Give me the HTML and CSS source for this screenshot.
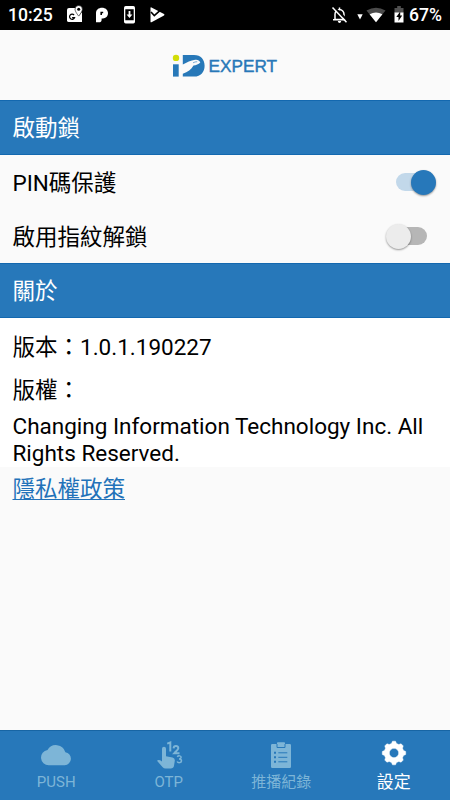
FILE: index.html
```html
<!DOCTYPE html>
<html lang="zh-Hant">
<head>
  <meta charset="UTF-8">
  <meta name="viewport" content="width=device-width, initial-scale=1.0">
  <title>iD Expert</title>
  <link rel="stylesheet" href="styles.css">
</head>
<body>
  <div class="status-bar">
    <span class="clock">10:25</span>
    <svg class="status-left" width="100" height="20" viewBox="0 0 100 20">
      <!-- maps -->
      <path fill="#fff" d="M3 3h7c0 3 1.500 5 3.200 7.500L16 7v10H3a2 2 0 0 1-2-1V5a2 2 0 0 1 2-2z"/>
      <path fill="none" stroke="#000" stroke-width="1.200" d="M8.100 10a2.600 2.600 0 1 0 .5 2.600H6.100"/>
      <path fill="#fff" stroke="#000" stroke-width=".6" d="M12.700.5a3.700 3.700 0 0 1 3.700 3.700c0 2.500-3.700 6.900-3.700 6.900S9 6.700 9 4.200A3.700 3.700 0 0 1 12.700.5z"/>
      <circle cx="12.700" cy="4.200" r="1.500"/>
      <!-- p mark -->
      <path fill="#fff" d="M30 8c0-3.200 2.600-5.300 6-5.300s6 2.200 6 5.400c0 3.300-2.300 5.300-5 5.300h-1.400v1.500c0 1.600-1 2.400-2.700 2.400H30z"/>
      <path fill="none" stroke="#000" stroke-width="1.600" d="M35.200 10V7.500h2"/>
      <!-- system update -->
      <rect x="58" y="1" width="11" height="17.500" rx="1.700" fill="#fff"/>
      <path d="M59.300 4.300h8.400v11h-8.400z"/>
      <path fill="#fff" d="M62.600 6h1.800v3.600h2L63.500 13l-2.900-3.400h2z"/>
      <!-- play -->
      <path fill="#fff" d="M85.500 2.500 98 9q1 .7 0 1.400l-12.500 6.900q-1 .3-1-.8V3q0-1 1-.5z"/>
      <path fill="none" stroke="#000" stroke-width="1.600" d="m85 7 3.300 3.600 6.700-6"/>
    </svg>
    <svg class="status-right" width="78" height="20" viewBox="0 0 78 20">
      <!-- notifications off -->
      <path fill="none" stroke="#fff" stroke-width="1.500" d="M5 14.500V9.200A4.600 4.600 0 0 1 9.500 4.500 4.600 4.600 0 0 1 14 9.200v5.300zM3 14.800h13M9.500 4.500V2.400"/>
      <path fill="#fff" d="M7.800 16h3.400q-.3 2-1.700 2t-1.700-2z"/>
      <path stroke="#000" stroke-width="2" d="m4.500 2.500 14 14"/>
      <path stroke="#fff" stroke-width="1.500" d="m2.500 2.500 14 14.700"/>
      <!-- wifi -->
      <path fill="#fff" d="M27.300 9.300h5.400L30 14.500z"/>
      <path fill="#4b4b4b" d="M36.500 5.400Q46 0 55.500 5.400L46 17.300z"/>
      <path fill="#fff" d="M39.600 9.300Q46 5.500 52.400 9.300L46 17.300z"/>
      <!-- battery -->
      <path fill="#505050" d="M64.500 3h2.700V1h3.600v2h2.700v5h-9z"/>
      <path fill="#fff" d="M64.500 7.500h9v10h-9z"/>
      <path d="M70.200 6.500 66.300 12h2.200v4l3.700-5.500h-2z"/>
    </svg>
    <span class="battery">67%</span>
  </div>

  <header class="header">
    <svg class="logo" width="106" height="24" viewBox="0 0 106 24">
      <circle cx="4" cy="3.900" r="3.200" fill="#d2dd08"/>
      <path fill="#2778b8" d="M1 10.300h5.700v12.300H1z"/>
      <path fill="#2778b8" d="M10.800 1H22c7 0 10.600 4.700 10.600 10.700S29 22.600 22 22.600H10.800v-2.800c5-1.600 8.500-4.500 10.700-8.300 2.700-.3 5-1.200 6.800-3-.9-2.200-2.700-3.100-5.100-2.700-4.700.6-8.200 2.600-12.400 4.700z"/>
      <path fill="none" stroke="#2778b8" stroke-width=".6" d="M21 8.800c1.400-.8 2.800-1.100 4.200-1.100"/>
      <text x="36.500" y="17.500" class="logo-text" textLength="68.500" lengthAdjust="spacingAndGlyphs">EXPERT</text>
    </svg>
  </header>

  <main class="content">
    <h2 class="section-title">啟動鎖</h2>
    <div class="setting">
      <span>PIN碼保護</span>
      <div class="switch on"></div>
    </div>
    <div class="setting">
      <span>啟用指紋解鎖</span>
      <div class="switch"></div>
    </div>
    <h2 class="section-title">關於</h2>
    <div class="about">
      <p class="version">版本：1.0.1.190227</p>
      <p class="rights">版權：</p>
      <p class="company">Changing Information Technology Inc. All Rights Reserved.</p>
    </div>
    <a class="privacy" href="#">隱私權政策</a>
  </main>

  <nav class="tabs">
    <div class="tab">
      <svg width="32" height="32" viewBox="0 0 32 32">
        <path fill="currentColor" d="M25.400 13.200A9.800 9.800 0 0 0 7.500 11 7.700 7.700 0 0 0 8.700 26.300h16a6.600 6.600 0 0 0 .7-13.100z"/>
      </svg>
      <span>PUSH</span>
    </div>
    <div class="tab">
      <svg width="32" height="32" viewBox="0 0 32 32">
        <path fill="currentColor" d="M9 9.800a2 2 0 0 1 4 0v7.500l6.500 1.300q2.600.6 2.300 3.200l-.8 5q-.5 2.700-3.200 2.700h-5.300q-1.700 0-2.800-1.200L4 21.800q1.500-2 5 .6z"/>
        <!-- 1 2 3 -->
        <g fill="none" stroke="currentColor" stroke-width="2">
          <path d="M14.200 4.600 17.300 3.500V12.400"/>
          <path d="M20.600 9.400C20.700 6 25.400 6.300 25.300 9.200 25.200 11 22.800 12.400 21.200 14.300H26.500"/>
          <path stroke-width="1.500" d="M24.300 17.800C25.200 16.300 28.300 16.600 28.100 18.500 28 19.600 27 20 26 20 27.300 20 28.500 20.600 28.500 21.900 28.400 24 25 24.200 24.100 22.500"/>
        </g>
      </svg>
      <span>OTP</span>
    </div>
    <div class="tab">
      <svg width="32" height="32" viewBox="0 0 32 32">
        <path fill="currentColor" d="M7.200 5H12V4q0-.8.800-.8h6.400q.8 0 .8.800v1h4.800q1.200 0 1.200 1.200v21.600q0 1.200-1.200 1.200H7.200Q6 29 6 27.800V6.200Q6 5 7.200 5z"/>
        <path fill="none" stroke="#2778ba" stroke-width="1" d="M12 5v3.500h8V5M13.300 13.800h9M13.300 18.300h9M13.300 22.800h9"/>
        <path fill="#2778ba" d="M9 12.800h2v2H9zM9 17.300h2v2H9zM9 21.800h2v2H9z"/>
      </svg>
      <span>推播紀錄</span>
    </div>
    <div class="tab active">
      <svg width="32" height="32" viewBox="0 0 32 32">
        <path fill="currentColor" stroke="currentColor" stroke-width=".5" stroke-linejoin="round" fill-rule="evenodd" d="M13.500 4.500 14.500 2.200h3l1 2.300 2.300 1 2.300-.7 2.100 2.100-.7 2.300 1 2.300 2.200 1v3l-2.200 1-1 2.300.7 2.300-2.100 2.100-2.300-.7-2.300 1-1 2.300h-3l-1-2.300-2.300-1-2.300.7-2.100-2.100.7-2.300-1-2.300-2.200-1v-3l2.200-1 1-2.300-.7-2.300 2.100-2.100 2.300.7zM16 9.300a4.700 4.700 0 1 0 0 9.400 4.700 4.700 0 0 0 0-9.400z"/>
      </svg>
      <span>設定</span>
    </div>
  </nav>
</body>
</html>
```

FILE: styles.css
```css
* {
  box-sizing: border-box;
}

body {
  margin: 0;
  height: 800px;
  display: flex;
  flex-direction: column;
  background: #fafafa;
  color: #000;
  font-family: Roboto, "Noto Sans CJK TC", sans-serif;
  font-size: 22.5px;
  overflow: hidden;
}

h2,
p {
  margin: 0;
  font-size: inherit;
  font-weight: 400;
}

.status-bar {
  display: flex;
  align-items: center;
  height: 30px;
  background: #000;
  color: #fff;
  font-size: 17.6px;
  font-weight: 500;
  line-height: 32px;
  padding: 0 7px 0 8px;
}

.clock {
  width: 58px;
}

.status-right {
  margin-left: auto;
}

.battery {
  width: 34px;
  margin-left: 1px;
}

.header {
  height: 70px;
  display: flex;
  justify-content: center;
  padding-top: 24px;
}

.logo-text {
  font-family: "Liberation Sans", Arial, sans-serif;
  font-size: 16px;
  fill: #2778b8;
  stroke: #2778b8;
  stroke-width: 0.4px;
}

.content {
  flex: 1;
}

.section-title {
  height: 55px;
  padding-left: 12.5px;
  line-height: 55px;
  background: #2778ba;
  border-top: 1px solid #1368af;
  border-bottom: 1px solid #1368af;
  color: #fff;
}

.setting {
  display: flex;
  align-items: center;
  justify-content: space-between;
  height: 54px;
  padding: 0 14px 0 12.5px;
}

.setting span {
  margin-bottom: 2px;
}

.switch {
  width: 49px;
  height: 26px;
  display: flex;
  align-items: center;
  position: relative;
}

.switch::before {
  content: "";
  width: 31px;
  height: 18px;
  margin-left: 9px;
  border-radius: 9px;
  background: #b6b6b6;
}

.switch::after {
  content: "";
  position: absolute;
  left: -1px;
  width: 25px;
  height: 25px;
  border-radius: 50%;
  background: #ececec;
  box-shadow: 0 1px 2px rgba(0, 0, 0, 0.4);
}

.switch.on::before {
  background: #c2d8ea;
}

.switch.on::after {
  left: 24px;
  background: #2778ba;
}

.about {
  height: 149px;
  padding: 12px 12.5px 0;
  background: #fff;
}

.version {
  height: 43px;
  line-height: 34px;
}

.rights {
  height: 40px;
  line-height: 34px;
}

.company {
  line-height: 26.5px;
}

.privacy {
  display: inline-block;
  margin-left: 12.5px;
  line-height: 45px;
  color: #2272b9;
  text-decoration-thickness: 1px;
  text-underline-offset: 2px;
}

.tabs {
  display: flex;
  height: 70px;
  background: #2778ba;
  border-top: 1px solid #1765a4;
}

.tab {
  flex: 1;
  display: flex;
  flex-direction: column;
  align-items: center;
  padding-top: 8px;
  color: #7db5d7;
  font-size: 15px;
  line-height: 23px;
}

.tab.active {
  color: #fff;
  font-size: 17px;
}
```
